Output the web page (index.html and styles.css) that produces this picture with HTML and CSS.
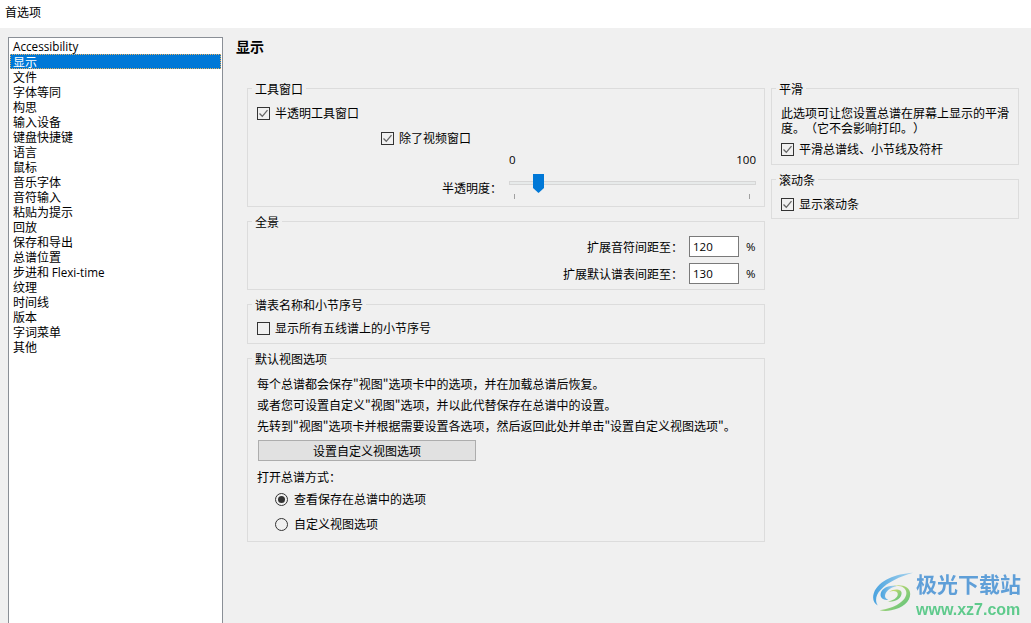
FILE: index.html
```html
<!DOCTYPE html>
<html lang="zh-CN">
<head>
<meta charset="utf-8">
<title>首选项</title>
<link rel="stylesheet" href="styles.css">
</head>
<body>
<div class="window">
  <header class="titlebar">首选项</header>
  <main class="main">
    <ul class="list">
      <li class="latin">Accessibility</li>
      <li class="selected"><span class="focus">显示</span></li>
      <li>文件</li><li>字体等同</li><li>构思</li><li>输入设备</li><li>键盘快捷键</li><li>语言</li><li>鼠标</li><li>音乐字体</li><li>音符输入</li><li>粘贴为提示</li><li>回放</li><li>保存和导出</li><li>总谱位置</li><li>步进和 <span class="latin">Flexi-time</span></li><li>纹理</li><li>时间线</li><li>版本</li><li>字词菜单</li><li>其他</li>
    </ul>
    <section class="content">
      <h1 class="heading">显示</h1>
      <div class="columns">
        <div class="col col-left">
          <fieldset class="group tool">
            <legend>工具窗口</legend>
            <label class="check"><span class="box"><svg viewBox="0 0 11 11"><path d="M1.5 5.5 4.3 8.3 9.5 2.2"/></svg></span>半透明工具窗口</label>
            <label class="check nested"><span class="box"><svg viewBox="0 0 11 11"><path d="M1.5 5.5 4.3 8.3 9.5 2.2"/></svg></span>除了视频窗口</label>
            <div class="scale"><span>0</span><span>100</span></div>
            <div class="slider-row">
              <span class="slider-label">半透明度：</span>
              <div class="slider">
                <div class="track"></div>
                <svg class="thumb" viewBox="0 0 11 19"><path d="M0 0H11V14L5.5 19 0 14Z"/></svg>
                <div class="ticks"><i></i><i></i></div>
              </div>
            </div>
          </fieldset>
          <fieldset class="group pano">
            <legend>全景</legend>
            <div class="field"><span>扩展音符间距至：</span><span class="input">120</span><span class="pct">%</span></div>
            <div class="field"><span>扩展默认谱表间距至：</span><span class="input">130</span><span class="pct">%</span></div>
          </fieldset>
          <fieldset class="group names">
            <legend>谱表名称和小节序号</legend>
            <label class="check"><span class="box"></span>显示所有五线谱上的小节序号</label>
          </fieldset>
          <fieldset class="group view">
            <legend>默认视图选项</legend>
            <p class="line">每个总谱都会保存"视图"选项卡中的选项，并在加载总谱后恢复。</p>
            <p class="line">或者您可设置自定义"视图"选项，并以此代替保存在总谱中的设置。</p>
            <p class="line">先转到"视图"选项卡并根据需要设置各选项，然后返回此处并单击"设置自定义视图选项"。</p>
            <button class="button" type="button">设置自定义视图选项</button>
            <p class="line open">打开总谱方式：</p>
            <label class="radio"><span class="dot on"></span>查看保存在总谱中的选项</label>
            <label class="radio second"><span class="dot"></span>自定义视图选项</label>
          </fieldset>
        </div>
        <div class="col col-right">
          <fieldset class="group smooth">
            <legend>平滑</legend>
            <p class="desc">此选项可让您设置总谱在屏幕上显示的平滑度。（它不会影响打印。）</p>
            <label class="check"><span class="box"><svg viewBox="0 0 11 11"><path d="M1.5 5.5 4.3 8.3 9.5 2.2"/></svg></span>平滑总谱线、小节线及符杆</label>
          </fieldset>
          <fieldset class="group scrollbar">
            <legend>滚动条</legend>
            <label class="check"><span class="box"><svg viewBox="0 0 11 11"><path d="M1.5 5.5 4.3 8.3 9.5 2.2"/></svg></span>显示滚动条</label>
          </fieldset>
        </div>
      </div>
    </section>
  </main>
  <div class="logo">
    <svg class="swirl" viewBox="0 0 46 42">
      <defs>
        <linearGradient id="sw1" x1="0" y1="0" x2="1" y2="0"><stop offset="0" stop-color="#4aa3df"/><stop offset="1" stop-color="#a9d4ee"/></linearGradient>
        <linearGradient id="sw2" x1="0" y1="0" x2="1" y2="1"><stop offset="0" stop-color="#e6e06a"/><stop offset="1" stop-color="#4fc07f"/></linearGradient>
      </defs>
      <path fill="url(#sw1)" d="M44 1C26 2 8 9 3 22c-2 6 0 11 4 13-3-5-2-11 3-16C17 11 30 5 44 1Z"/>
      <path fill="url(#sw1)" d="M27 15C18 13 10 18 10 24c0 4 4 6 8 5-3-1-4-3-3-6 2-4 6-7 12-8Z"/>
      <path fill="url(#sw2)" d="M22 15c8-2 15 1 15 7 0 8-12 16-28 18 4 1 8 1 12 0 12-2 20-9 20-17 0-7-9-11-19-8Z"/>
      <path fill="url(#sw2)" d="M19 21c4-2 9-1 9 2 0 4-5 7-11 8 8 1 15-3 15-9 0-4-8-5-13-1Z"/>
    </svg>
    <div class="logo-text">
      <div class="logo-cn">极光下载站</div>
      <div class="logo-url">www.xz7.com</div>
    </div>
  </div>
</div>
</body>
</html>
```
FILE: styles.css
```css
* { box-sizing: border-box; }
html, body { margin: 0; height: 100%; }
body {
  overflow: hidden;
  background: #f0f0f0;
  color: #000;
  font: 12px/15px "Noto Sans CJK SC", "Noto Sans", sans-serif;
  text-spacing-trim: space-all;
}
.window { position: relative; height: 623px; overflow: hidden; display: flex; flex-direction: column; }
.titlebar { height: 28px; flex: none; background: #fff; padding: 4px 0 0 5px; line-height: 15px; }
.main { flex: 1; display: flex; min-height: 0; }

.list {
  list-style: none;
  width: 215px;
  flex: none;
  margin: 9px 0 -3px 8px;
  padding: 1px;
  background: #fff;
  border: 1px solid #8a8f96;
}
.list li { height: 15px; line-height: 15px; padding-left: 3px; white-space: nowrap; }
.latin { font-family: "Open Sans", "Noto Sans", sans-serif; font-size: 11.7px; color: #000; }
.list li.selected { background: #0078d7; color: #fff; padding-left: 0; outline: 1px dotted #e8b060; outline-offset: -1px; }
.focus { display: block; padding-left: 3px; }

.content { flex: 1; min-width: 0; padding: 8px 0 0 13px; }
.heading { margin: 0 0 25px; font-size: 14px; line-height: 20px; font-weight: 700; }
.columns { display: flex; gap: 6px; padding-left: 11px; align-items: flex-start; }
.col { display: flex; flex-direction: column; gap: 7px; }
.col-left { width: 518px; }
.col-right { width: 248px; }

.group { margin: 0; min-width: 0; border: 1px solid #dcdcdc; padding: 0 8px 5px 9px; }
.group legend { padding: 0 3px; margin-left: -5px; line-height: 15px; white-space: nowrap; }

.check, .radio { display: flex; align-items: center; height: 18px; line-height: 18px; white-space: nowrap; }
.box { width: 13px; height: 13px; flex: none; margin-right: 5px; border: 1px solid #333; background: transparent; display: block; }
.box svg { display: block; width: 11px; height: 11px; }
.box path { fill: none; stroke: #666; stroke-width: 1.3; }

.tool { padding-bottom: 7px; }
.tool .check:first-of-type { margin-top: 8px; }
.check.nested { margin: 7px 0 0 124px; }
.scale { display: flex; justify-content: space-between; margin: 6px 0 0 252px; line-height: 14px; font-family: "Open Sans", "Noto Sans", sans-serif; font-size: 11.5px; }
.slider-row { display: flex; margin-top: 7px; height: 25px; }
.slider-label { width: 245px; text-align: right; padding-top: 6px; margin-right: 7px; line-height: 15px; }
.slider { position: relative; width: 247px; }
.track { position: absolute; left: 0; right: 0; top: 7px; height: 4px; background: #e7eaea; border: 1px solid #d6d6d6; }
.thumb { position: absolute; left: 24px; top: 0; width: 11px; height: 19px; display: block; }
.thumb path { fill: #0078d7; }
.ticks { position: absolute; left: 5px; right: 6px; top: 20px; display: flex; justify-content: space-between; }
.ticks i { display: block; width: 1px; height: 5px; background: #a0a0a0; }

.pano { padding-bottom: 5px; }
.field { display: flex; justify-content: flex-end; align-items: center; height: 21px; margin-top: 6px; }
.pano legend + .field { margin-top: 7px; }
.input { width: 50px; height: 21px; margin-left: 6px; padding-left: 3px; line-height: 19px; background: #fff; border: 1px solid #7a7a7a; font-family: "Open Sans", "Noto Sans", sans-serif; font-size: 11.5px; }
.pct { width: 10px; margin-left: 7px; font-family: "Open Sans", "Noto Sans", sans-serif; font-size: 11.5px; }

.names { padding-bottom: 6px; }
.names .check { margin-top: 7px; }

.view { padding-bottom: 8px; }
.line { margin: 0; height: 21px; line-height: 21px; white-space: nowrap; }
.view legend + .line { margin-top: 7px; }
.button { display: block; width: 218px; height: 21px; margin: 4px 0 0 1px; padding: 0; background: #e1e1e1; border: 1px solid #adadad; font: inherit; line-height: 19px; color: #000; }
.line.open { margin-top: 5px; }
.radio { margin: 3px 0 0 18px; }
.radio.second { margin-top: 7px; }
.dot { position: relative; width: 13px; height: 13px; flex: none; margin-right: 6px; border: 1px solid #333; border-radius: 50%; }
.dot.on::after { content: ""; position: absolute; left: 2px; top: 2px; width: 7px; height: 7px; border-radius: 50%; background: #333; }

.smooth { padding-bottom: 6px; }
.desc { margin: 9px 0 0; line-height: 15px; }
.smooth .check { margin-top: 5px; }
.scrollbar { padding-bottom: 5px; }
.scrollbar .check { margin-top: 8px; }

.logo { position: absolute; left: 871px; top: 571px; display: flex; gap: 1px; filter: blur(0.45px); }
.swirl { width: 44px; height: 42px; display: block; }
.logo-cn { font-size: 21px; line-height: 24px; font-weight: 700; color: #5f9fd8; white-space: nowrap; }
.logo-url { margin-top: 6px; font: 700 16px/18px "Liberation Sans", sans-serif; color: #5fca8c; white-space: nowrap; }
```
